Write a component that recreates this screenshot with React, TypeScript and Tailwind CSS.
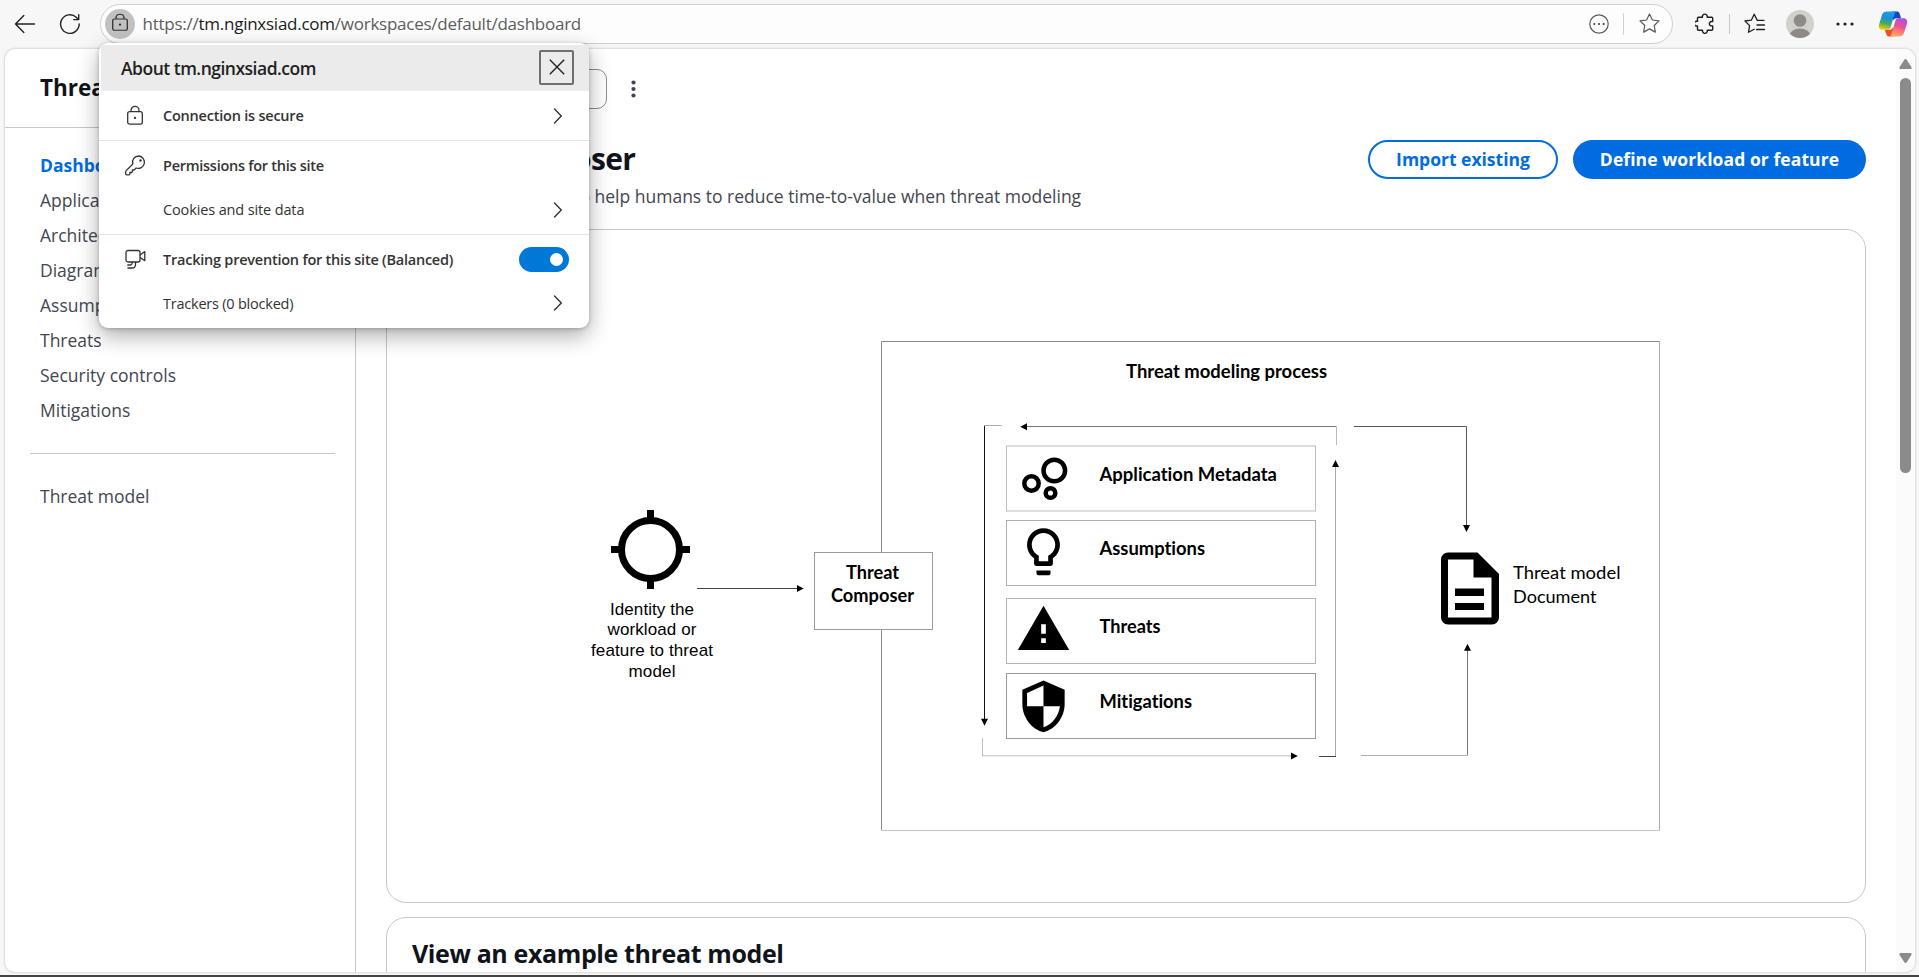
import React from "react";

const NAV = ["Dashboard", "Application info", "Architecture", "Diagram", "Assumptions", "Threats", "Security controls", "Mitigations"];

function LockIcon({ className }: { className?: string }) {
  return (
    <svg className={className} width="20" height="22" viewBox="0 0 20 22" preserveAspectRatio="none" fill="none" stroke="currentColor" strokeWidth="1.3">
      <rect x="2.7" y="7" width="14.6" height="13" rx="2" />
      <path d="M6 7V5.4a4 4 0 0 1 8 0V7" />
      <circle cx="10" cy="13.5" r="1.2" fill="currentColor" stroke="none" />
    </svg>
  );
}

function Chevron() {
  return (
    <svg width="10" height="16" viewBox="0 0 10 16" fill="none" stroke="#333" strokeWidth="1.4" strokeLinecap="round">
      <path d="M1.5 1 8.3 8l-6.8 7" />
    </svg>
  );
}

function CopilotIcon() {
  return (
    <svg width="30" height="28" viewBox="0 0 30 28">
      <defs>
        <linearGradient id="cpA" x1="0.5" y1="0" x2="0.3" y2="1">
          <stop offset="0" stopColor="#1a9cf0" />
          <stop offset="0.35" stopColor="#1b8fd8" />
          <stop offset="0.65" stopColor="#46a95c" />
          <stop offset="1" stopColor="#f4cf0b" />
        </linearGradient>
        <linearGradient id="cpB" x1="0.7" y1="0" x2="0.4" y2="1">
          <stop offset="0" stopColor="#a650ea" />
          <stop offset="0.45" stopColor="#ee5092" />
          <stop offset="1" stopColor="#ffad5c" />
        </linearGradient>
      </defs>
      <path d="M14 1.5h5.2c1.4 0 2 .8 2.4 2l1.5 4.7h-4.8c-1.7 0-2.5 1-3 2.6Z" fill="#1646c8" />
      <path d="M16 26.5h-5.2c-1.4 0-2-.8-2.4-2l-1.6-4.8h4.9c1.7 0 2.5-1 3-2.6Z" fill="#f0502f" />
      <path d="M9 1.5h9.8c-1.1 0-1.7.8-2.1 2l-4 13.4c-.6 1.8-1.5 2.8-3.3 2.8H4.6c-3.4 0-4.3-2.6-3.5-5.5L4 4.9C4.7 2.7 6.5 1.5 9 1.5Z" fill="url(#cpA)" />
      <path d="M21 26.5h-9.8c1.1 0 1.7-.8 2.1-2l4-13.5c.6-1.8 1.5-2.8 3.3-2.8h4.8c3.4 0 4.3 2.6 3.5 5.5L26 23.1c-.7 2.2-2.5 3.4-5 3.4Z" fill="url(#cpB)" />
    </svg>
  );
}

function BrowserBar() {
  return (
    <header className="flex h-[48px] shrink-0 items-center pb-px">
      <div className="flex w-[100px] items-center gap-[23px] pl-[14px] text-[#222]">
        <svg width="22" height="20" viewBox="0 0 22 20" fill="none" stroke="currentColor" strokeWidth="1.4" strokeLinecap="round" strokeLinejoin="round">
          <path d="M20.5 10H1.5M9.8 1.5 1.5 10l8.3 8.5" />
        </svg>
        <svg width="22" height="22" viewBox="0 0 22 22" fill="none" stroke="currentColor" strokeWidth="1.4" strokeLinecap="round" strokeLinejoin="round">
          <path d="M20.2 11a9.3 9.3 0 1 1-3-6.8l2.3 2.2M19.7 1.7v4.9h-5" />
        </svg>
      </div>
      <div className="flex h-10 w-[1573px] items-center rounded-full border-[1.5px] border-[#cfcfcf] bg-[#fdfdfd] pr-3 pl-1">
        <span className="flex size-[30px] items-center justify-center rounded-full bg-[#c1c1c1] text-[#333]">
          <LockIcon className="mr-px mb-[3px] h-[19px] w-[20px]" />
        </span>
        <span className="ml-[7.5px] text-[17px] tracking-[-0.25px] text-[#5c5c5c]">
          https://<span className="text-[#1b1b1b]">tm.nginxsiad.com</span>/workspaces/default/dashboard
        </span>
        <svg className="ml-auto" width="20" height="20" viewBox="0 0 20 20" fill="none" stroke="#5a5a5a" strokeWidth="1.2">
          <circle cx="10" cy="10" r="9.2" />
          <g fill="#444" stroke="none"><circle cx="5.3" cy="10" r="1.1" /><circle cx="10" cy="10" r="1.1" /><circle cx="14.7" cy="10" r="1.1" /></g>
        </svg>
        <span className="ml-[14px] h-[22px] w-px bg-[#d0d0d0]" />
        <svg className="ml-[15px]" width="21" height="21" viewBox="0 0 21 21" fill="none" stroke="#5a5a5a" strokeWidth="1.2" strokeLinejoin="round">
          <path d="m10.5 1 2.9 6 6.6.9-4.8 4.6 1.2 6.6-5.9-3.2-5.9 3.2 1.2-6.6L1 7.9 7.6 7Z" />
        </svg>
      </div>
      <div className="flex flex-1 items-center pl-[22px] text-[#1f1f1f]">
        <svg width="19" height="21" viewBox="0 0 19 21" fill="none" stroke="currentColor" strokeWidth="1.4" strokeLinejoin="round">
          <path d="M3.5 4.2h4a2.4 2.4 0 1 1 4.6 0h4.6q1 0 1 1v3.3h-1.2a2.2 2.2 0 1 0 0 4.4h1.2v3.4q0 1-1 1h-4.5a2.4 2.4 0 1 1-4.6 0h-4.1q-1 0-1-1v-3.4a2.4 2.4 0 1 1 0-4.5V5.2q0-1 1-1Z" />
        </svg>
        <span className="ml-[15px] h-[20px] w-px bg-[#c8c8c8]" />
        <svg className="ml-[14px]" width="22" height="21" viewBox="0 0 22 21" fill="none" stroke="currentColor" strokeWidth="1.3" strokeLinejoin="round" strokeLinecap="round">
          <path d="M13.3 7.4 10.2 1.2 7.3 7.2 1 8l4.6 4.6-1.1 6.7 5.7-3.1M13.3 7.4H20M13 12h7.5M12.5 16.5h8" />
        </svg>
        <svg className="ml-[20px]" width="28" height="28" viewBox="0 0 28 28">
          <defs><clipPath id="av"><circle cx="14" cy="14" r="14" /></clipPath></defs>
          <g clipPath="url(#av)">
            <rect width="28" height="28" fill="#d2d0cc" />
            <circle cx="14" cy="10.5" r="6.3" fill="#8e8a86" />
            <ellipse cx="14" cy="26" rx="10.5" ry="7.6" fill="#8e8a86" />
          </g>
        </svg>
        <svg className="ml-[22px]" width="18" height="4" viewBox="0 0 18 4" fill="currentColor"><circle cx="2" cy="2" r="1.6" /><circle cx="9" cy="2" r="1.6" /><circle cx="16" cy="2" r="1.6" /></svg>
        <span className="ml-6"><CopilotIcon /></span>
      </div>
    </header>
  );
}

function Sidebar() {
  return (
    <aside className="flex w-[351px] shrink-0 flex-col border-r border-[#c6c6cd]">
      <div className="flex h-[79px] items-center border-b border-[#c6c6cd] pl-[35px] text-[22.5px] font-bold text-[#0f141a]">Threat Composer</div>
      <nav className="flex flex-col pt-[20px] pl-[35px]">
        {NAV.map((n, i) => (
          <a key={n} className={i === 0 ? "h-[35px] text-[17.5px] leading-[35px] font-bold text-[#006ce0]" : "h-[35px] text-[17.5px] leading-[35px] text-[#424650]"}>{n}</a>
        ))}
      </nav>
      <div className="mt-[25px] mr-5 ml-[25px] h-px bg-[#c6c6cd]" />
      <a className="mt-[25px] pl-[35px] text-[17.5px] leading-[35px] text-[#424650]">Threat model</a>
    </aside>
  );
}

function Diagram() {
  return (
    <svg width="1478" height="671" viewBox="387 230 1478 671" className="block">
      <g fill="none" strokeWidth="1">
        <path d="M881.5 830V341.5H1659" stroke="#8a8a8a" />
        <path d="M1659.5 341V830" stroke="#adadad" />
        <path d="M881 830.5h779" stroke="#c4c4c4" />
        <path d="M697 588.5h101" stroke="#444" />
        <path d="M984 425.5h17.5" stroke="#aaa" />
        <path d="M984.5 426V720" stroke="#111" />
        <path d="M1026 426.5h310.5" stroke="#777" />
        <path d="M1336.5 427v18" stroke="#bbb" />
        <path d="M1335.5 466V756" stroke="#a8a8a8" />
        <path d="M1319 756.5h17" stroke="#444" />
        <path d="M982.5 738v18" stroke="#bbb" />
        <path d="M982 755.8h310" stroke="#bfbfbf" />
        <path d="M1354 426.5h112.5V527" stroke="#555" />
        <path d="M1467.5 650V755" stroke="#777" />
        <path d="M1361 755.5h107" stroke="#b0b0b0" />
      </g>
      <path d="M797 585v7l6.7-3.5ZM981 718.7h7l-3.5 7ZM1027 423.3v7l-6.8-3.5ZM1332 467h7l-3.5-7ZM1291 752.5v7l6.8-3.5ZM1463 525h7l-3.5 7ZM1464 650.7h7l-3.5-7Z" />
      <g fill="#fff" stroke="#9a9a9a">
        <rect x="814.5" y="552.5" width="118" height="77" />
        <rect x="1006.5" y="446" width="309" height="65" stroke="#bdbdbd" />
        <rect x="1006.5" y="520.5" width="309" height="65" stroke="#b0b0b0" />
        <rect x="1006.5" y="598.5" width="309" height="65" stroke="#b5b5b5" />
        <rect x="1006.5" y="673.5" width="309" height="65" />
      </g>
      <circle cx="650.5" cy="549.5" r="29" fill="none" stroke="#000" strokeWidth="7" />
      <path d="M650.5 510v12M650.5 577v12M611 549.5h12M678 549.5h12" stroke="#000" strokeWidth="7" />
      <g fill="none" stroke="#000" strokeWidth="4.5">
        <circle cx="1031.5" cy="483.5" r="7.2" />
        <circle cx="1054.3" cy="470.5" r="10.8" />
        <circle cx="1050.5" cy="493" r="4.8" />
      </g>
      <path transform="translate(1015.3 523.6) scale(2.35)" d="M9 21c0 .55.45 1 1 1h4c.55 0 1-.45 1-1v-1H9v1zm3-19C8.14 2 5 5.14 5 9c0 2.38 1.19 4.47 3 5.74V17c0 .55.45 1 1 1h6c.55 0 1-.45 1-1v-2.26c1.81-1.27 3-3.36 3-5.74 0-3.86-3.14-7-7-7zm2.85 11.1l-.85.6V16h-4v-2.3l-.85-.6C7.8 12.16 7 10.63 7 9c0-2.76 2.24-5 5-5s5 2.24 5 5c0 1.63-.8 3.16-2.15 4.1z" />
      <path transform="translate(1015.5 601) scale(2.335)" d="M1 21h22L12 2 1 21zm12-3h-2v-2h2v2zm0-4h-2v-4h2v4z" />
      <path transform="translate(1015.3 678.1) scale(2.35)" d="M12 1L3 5v6c0 5.55 3.84 10.74 9 12 5.16-1.26 9-6.45 9-12V5l-9-4zm0 10.99h7c-.53 4.12-3.28 7.79-7 8.94V12H5V6.3l7-3.11v8.8z" />
      <path fillRule="evenodd" d="M1448 552.5h29.5l21.5 21.5v43.5a7 7 0 0 1-7 7h-44a7 7 0 0 1-7-7v-58a7 7 0 0 1 7-7ZM1448 559.5v58h43.5v-40h-18v-18ZM1455 588.5h29v7.5h-29ZM1455 603h29v7h-29Z" />
      <g className="font-['Liberation_Sans',sans-serif]" fontSize="17" textAnchor="middle">
        <text x="652" y="615" textLength="84">Identity the</text>
        <text x="652" y="635" textLength="89">workload or</text>
        <text x="652" y="656" textLength="122">feature to threat</text>
        <text x="652" y="677" textLength="47">model</text>
      </g>
      <g className="font-['Lato',sans-serif] [font-variant-ligatures:none]" fontSize="18" fontWeight="700">
        <text x="846" y="578.5" textLength="53" lengthAdjust="spacingAndGlyphs">Threat</text>
        <text x="831" y="602" textLength="83" lengthAdjust="spacingAndGlyphs">Composer</text>
        <text x="1126" y="378" textLength="201" lengthAdjust="spacingAndGlyphs">Threat modeling process</text>
        <text x="1099.5" y="480.5" textLength="177.5" lengthAdjust="spacingAndGlyphs">Application Metadata</text>
        <text x="1099.5" y="555" textLength="105.5" lengthAdjust="spacingAndGlyphs">Assumptions</text>
        <text x="1099.5" y="632.5" textLength="61" lengthAdjust="spacingAndGlyphs">Threats</text>
        <text x="1099.5" y="708" textLength="92.5" lengthAdjust="spacingAndGlyphs">Mitigations</text>
      </g>
      <g className="font-['Lato',sans-serif]" fontSize="18">
        <text x="1513" y="578.5" textLength="107.5" lengthAdjust="spacingAndGlyphs">Threat model</text>
        <text x="1513" y="602.5" textLength="83.5" lengthAdjust="spacingAndGlyphs">Document</text>
      </g>
    </svg>
  );
}

function Main() {
  return (
    <main className="flex min-w-0 flex-1 flex-col pr-[30px] pl-[30px]">
      <div className="flex h-[80px] shrink-0 items-center">
        <div className="h-10 w-[221px] rounded-[10px] border border-[#8c8c94]" />
        <svg className="ml-[24px]" width="5" height="18" viewBox="0 0 5 18" fill="#424650"><circle cx="2.5" cy="2.5" r="2.1" /><circle cx="2.5" cy="9" r="2.1" /><circle cx="2.5" cy="15.5" r="2.1" /></svg>
      </div>
      <div className="flex h-[100px] shrink-0 justify-between pt-[11px]">
        <div>
          <h1 className="text-[30px] leading-[38px] font-bold tracking-[-0.6px] text-[#0f141a]">Threat Composer</h1>
          <p className="mt-[6px] text-[17.5px] leading-[25px] text-[#424650]">A threat modeling tool to help humans to reduce time-to-value when threat modeling</p>
        </div>
        <div className="flex gap-[15px] text-[17.5px] font-bold">
          <button className="h-[39px] w-[190px] rounded-full border-[2.5px] border-[#006ce0] text-[#006ce0]">Import existing</button>
          <button className="h-[39px] w-[293px] rounded-full bg-[#006ce0] tracking-[0.08px] text-white">Define workload or feature</button>
        </div>
      </div>
      <section className="h-[674px] shrink-0 overflow-hidden rounded-[20px] border border-[#c6c6cd]"><Diagram /></section>
      <section className="mt-[14px] h-[200px] shrink-0 rounded-[20px] border border-[#c6c6cd] px-[25px] pt-[20px]">
        <h2 className="text-[25px] leading-[30px] font-bold tracking-[-0.38px] text-[#0f141a]">View an example threat model</h2>
      </section>
    </main>
  );
}

function ScrollBar() {
  return (
    <div className="flex w-[19px] shrink-0 flex-col items-center bg-[#fbfbfb] pt-[10px] pb-[9px]">
      <svg width="13" height="10" viewBox="0 0 13 10" fill="#8b8b8b"><path d="M6.5 0c.5 0 .9.2 1.2.7l4.7 7.2c.6 1 .1 2.1-1 2.1H1.6c-1.1 0-1.6-1.1-1-2.1L5.3.7C5.6.2 6 0 6.5 0Z" /></svg>
      <div className="mt-[9px] h-[395px] w-[11px] rounded-full bg-[#8b8b8b]" />
      <svg className="mt-auto" width="13" height="10" viewBox="0 0 13 10" fill="#8b8b8b"><path d="M6.5 10c-.5 0-.9-.2-1.2-.7L.6 2.1C0 1.1.5 0 1.6 0h9.8c1.1 0 1.6 1.1 1 2.1L7.7 9.3c-.3.5-.7.7-1.2.7Z" /></svg>
    </div>
  );
}

function SitePopup() {
  return (
    <div className="absolute top-[43px] left-[99px] w-[490px] rounded-[9px] bg-white pt-[2px] text-[14.5px] tracking-[-0.13px] text-[#333] shadow-[0_8px_22px_rgba(0,0,0,0.32),0_1px_4px_rgba(0,0,0,0.22)]">
      <div className="ml-[2px] flex h-[46px] items-center justify-between bg-[#ebebeb] pr-[15px] pl-5">
        <span className="text-[17.5px] font-semibold tracking-[-0.5px] text-[#1f1f1f]">About tm.nginxsiad.com</span>
        <span className="mb-[2px] flex h-[35px] w-[35px] items-center justify-center rounded-[2px] border-2 border-[#6f6f6f]">
          <svg width="16" height="16" viewBox="0 0 16 16" stroke="#222" strokeWidth="1.4"><path d="m.8.8 14.4 14.4M15.2.8.8 15.2" /></svg>
        </span>
      </div>
      <div className="flex h-[50px] items-center border-b border-[#e6e6e6] pr-[26px] pl-[26px]">
        <span className="w-[38px]"><LockIcon className="h-[21px] w-5" /></span>
        <span className="pt-px font-semibold tracking-[-0.22px]">Connection is secure</span>
        <span className="ml-auto"><Chevron /></span>
      </div>
      <div className="border-b border-[#e6e6e6] pt-[3px] pr-[26px] pb-[2px] pl-[26px]">
        <div className="flex h-[43px] items-center">
          <svg className="mr-[17px]" width="21" height="21" viewBox="0 0 21 21" fill="none" stroke="#333" strokeWidth="1.3" strokeLinejoin="round">
            <path d="M13.8 1a6.2 6.2 0 0 0-6 8L1.2 15.6q-.5.5-.5 1.2v2q0 1 1 1h2.2q1 0 1-1v-1.3h1.5q1 0 1-1V15h1.3q.6 0 1-.4l1.4-1.6a6.2 6.2 0 1 0 2.7-12Z" />
            <circle cx="15.5" cy="5.5" r="1.2" fill="#333" stroke="none" />
          </svg>
          <span className="pt-px font-semibold tracking-[-0.27px]">Permissions for this site</span>
        </div>
        <div className="flex h-[45px] items-center justify-between pl-[38px]"><span className="pt-px">Cookies and site data</span><Chevron /></div>
      </div>
      <div className="pt-[3px] pr-[20px] pb-[3px] pl-[26px]">
        <div className="flex h-[43px] items-center">
          <svg className="mr-[16px]" width="22" height="21" viewBox="0 0 22 21" fill="none" stroke="#333" strokeWidth="1.3" strokeLinejoin="round">
            <rect x="1" y="1.5" width="14" height="11.5" rx="2" />
            <path d="m15 6 4.8-3.4v9L15 8.5M7 13v1.5q0 1.5-1.5 1.5H2.3M10.5 13v2.5q0 3.5-3.5 3.5H2.5" />
          </svg>
          <span className="pt-px font-semibold tracking-[-0.23px]">Tracking prevention for this site (Balanced)</span>
          <span className="ml-auto flex h-[25px] w-[50px] items-center justify-end rounded-full bg-[#0078d7] pr-[6px]"><span className="size-[13px] rounded-full bg-white" /></span>
        </div>
        <div className="flex h-[44px] items-center justify-between pr-[6px] pl-[38px]"><span className="pt-[2px] tracking-[-0.22px]">Trackers (0 blocked)</span><Chevron /></div>
      </div>
    </div>
  );
}

export default function App() {
  return (
    <div className="relative flex h-[977px] w-[1919px] flex-col overflow-hidden border-b-2 border-[#444] bg-[#f7f7f7] font-['Open_Sans','Noto_Sans',sans-serif]">
      <BrowserBar />
      <div className="mt-px mr-[4px] ml-[5px] flex h-[923px] shrink-0 overflow-hidden rounded-[10px] bg-white shadow-[0_0_2px_1px_rgba(0,0,0,0.12)]">
        <Sidebar />
        <Main />
        <ScrollBar />
      </div>
      <SitePopup />
    </div>
  );
}
